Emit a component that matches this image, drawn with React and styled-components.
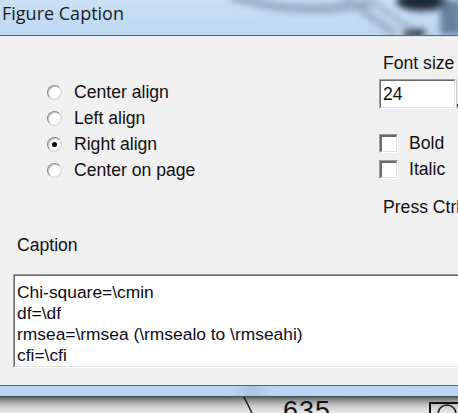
import React from "react";
import styled, { createGlobalStyle } from "styled-components";

const GlobalStyle = createGlobalStyle`
  html, body { margin: 0; padding: 0; overflow: hidden; background: #e4e4e4; }
`;

const Frame = styled.div`
  width: 458px;
  height: 413px;
  display: flex;
  flex-direction: column;
  overflow: hidden;
  font-family: "Liberation Sans", Arial, sans-serif;
  color: #111;
`;

const TitleBar = styled.div`
  position: relative;
  flex: none;
  height: 35px;
  background: linear-gradient(180deg, #cae1f6 0%, #bcd7f1 100%);
  border-bottom: 1px solid #55677a;
  overflow: hidden;
`;

const Glass = styled.svg`
  position: absolute;
  inset: 0;
`;

const TitleText = styled.div`
  position: relative;
  padding-left: 2px;
  font-family: "Open Sans", "Noto Sans", sans-serif;
  font-size: 18px;
  line-height: 27px;
  color: #1b1b1b;
`;

const Body = styled.div`
  flex: none;
  height: 348px;
  background: #f0f0f0;
  border-top: 1px solid #e2e6ea;
  border-bottom: 1px solid #5b6570;
  overflow: hidden;
  font-size: 17.6px;
`;

const TopArea = styled.div`
  display: flex;
  height: 195px;
`;

const LeftCol = styled.div`
  flex: none;
  width: 332px;
  padding: 42px 0 0 47px;
  display: flex;
  flex-direction: column;
`;

const OptionRow = styled.label`
  display: flex;
  align-items: center;
  height: 26px;
  white-space: nowrap;
`;

const Radio = styled.span`
  position: relative;
  flex: none;
  box-sizing: border-box;
  width: 15px;
  height: 15px;
  border-radius: 50%;
  background: #fff;
  border: 1px solid;
  border-color: #888 #d6d6d6 #d6d6d6 #888;
  box-shadow: inset 1px 1px 0 #c4c4c4, inset -1px -1px 0 #ececec;
  margin-right: 12px;
  &::after {
    content: "";
    display: ${(p) => (p.$checked ? "block" : "none")};
    position: absolute;
    left: 4px;
    top: 4px;
    width: 5px;
    height: 5px;
    border-radius: 50%;
    background: #000;
  }
`;

const RightCol = styled.div`
  flex: none;
  width: 200px;
  padding-top: 16px;
  display: flex;
  flex-direction: column;
  white-space: nowrap;
`;

const Label = styled.div`
  line-height: 20px;
  padding-left: ${(p) => p.$indent || 0}px;
  margin-top: ${(p) => p.$top || 0}px;
`;

const SpinRow = styled.div`
  display: flex;
  margin-top: 6px;
`;

const Sunken = styled.div`
  box-sizing: border-box;
  border: 1px solid;
  border-color: #a0a0a0 #ffffff #ffffff #a0a0a0;
`;

const SunkenInner = styled.div`
  box-sizing: border-box;
  height: 100%;
  border: 1px solid;
  border-color: #696969 #e3e3e3 #e3e3e3 #696969;
  background: #fff;
`;

const SizeInput = styled(Sunken)`
  width: 77px;
  height: 30px;
`;

const SizeValue = styled(SunkenInner)`
  padding-left: 2px;
  line-height: 26px;
`;

const SpinButton = styled.div`
  width: 20px;
  height: 30px;
  background: #e6e6e6;
  border-left: 1px solid #cfcfcf;
  position: relative;
  &::before {
    content: "";
    position: absolute;
    left: 0;
    bottom: 2px;
    width: 2px;
    height: 3px;
    background: #333;
  }
`;

const CheckRow = styled.label`
  display: flex;
  align-items: center;
  height: 26px;
  margin-top: ${(p) => p.$top || 0}px;
`;

const CheckBox = styled(Sunken)`
  width: 19px;
  height: 19px;
  margin-right: 11px;
  & > div {
    border-width: 2px 1px 1px 2px;
  }
`;

const Editor = styled(Sunken)`
  margin: 19px 0 0 13px;
  width: 470px;
  height: 94px;
`;

const EditorText = styled(SunkenInner)`
  padding: 6px 0 0 2px;
  font-size: 17.4px;
  line-height: 21px;
  white-space: pre;
  color: #0c0c20;
`;

const BlueStrip = styled.div`
  flex: none;
  height: 10px;
  background: linear-gradient(90deg, #b9d7f3 0%, #b9d7f3 50%, #a9c6e3 55%, #b9d7f3 60%, #bad8f4 100%);
  border-bottom: 1px solid #474f58;
`;

const Desktop = styled.div`
  position: relative;
  flex: none;
  height: 16px;
  background: linear-gradient(180deg, #5e5e5e 0px, #8e8e8e 3px, #c2c2c2 8px, #dedede 13px, #e8e8e8 16px);
  overflow: hidden;
`;

const DeskNumber = styled.span`
  position: absolute;
  left: 283px;
  top: 1px;
  font-family: "Liberation Sans", Arial, sans-serif;
  font-size: 27px;
  line-height: 1;
  color: #141414;
  letter-spacing: 1px;
`;

const DeskArt = styled.svg`
  position: absolute;
  inset: 0;
`;

const options = ["Center align", "Left align", "Right align", "Center on page"];

const caption = `Chi-square=\\cmin
df=\\df
rmsea=\\rmsea (\\rmsealo to \\rmseahi)
cfi=\\cfi`;

export default function App() {
  return (
    <>
      <GlobalStyle />
      <Frame>
        <TitleBar>
          <Glass width="458" height="35" viewBox="0 0 458 35">
            <defs>
              <filter id="blur" x="-20%" y="-50%" width="140%" height="200%">
                <feGaussianBlur stdDeviation="3.5" />
              </filter>
            </defs>
            <g filter="url(#blur)">
              <path d="M230 -4 Q300 18 372 2" stroke="#8797b4" strokeWidth="9" fill="none" opacity="0.75" />
              <path d="M345 -2 L395 34" stroke="#97abc4" strokeWidth="7" fill="none" />
              <path d="M368 -2 L412 30" stroke="#a6b9cf" strokeWidth="6" fill="none" />
              <ellipse cx="422" cy="2" rx="26" ry="9" fill="#1d2835" />
              <ellipse cx="414" cy="33" rx="12" ry="4" fill="#151b22" />
              <rect x="440" y="0" width="22" height="35" fill="#4f6a88" opacity="0.8" />
            </g>
          </Glass>
          <TitleText>Figure Caption</TitleText>
        </TitleBar>
        <Body>
          <TopArea>
            <LeftCol>
              {options.map((o, i) => (
                <OptionRow key={o}>
                  <Radio $checked={i === 2} />
                  {o}
                </OptionRow>
              ))}
            </LeftCol>
            <RightCol>
              <Label $indent={4}>Font size</Label>
              <SpinRow>
                <SizeInput>
                  <SizeValue>24</SizeValue>
                </SizeInput>
                <SpinButton />
              </SpinRow>
              <CheckRow $top={21}>
                <CheckBox><SunkenInner /></CheckBox>
                Bold
              </CheckRow>
              <CheckRow>
                <CheckBox><SunkenInner /></CheckBox>
                Italic
              </CheckRow>
              <Label $indent={4} $top={15}>Press Ctrl+Enter</Label>
            </RightCol>
          </TopArea>
          <Label $indent={17} $top={3}>Caption</Label>
          <Editor>
            <EditorText>{caption}</EditorText>
          </Editor>
        </Body>
        <BlueStrip />
        <Desktop>
          <DeskArt width="458" height="16" viewBox="0 0 458 16">
            <path d="M244 0 L252 16" stroke="#1a1a1a" strokeWidth="1.5" />
            <rect x="430" y="6" width="40" height="14" fill="none" stroke="#111" strokeWidth="2" />
            <circle cx="447" cy="17" r="9" fill="none" stroke="#222" strokeWidth="1.5" />
          </DeskArt>
          <DeskNumber>635</DeskNumber>
        </Desktop>
      </Frame>
    </>
  );
}
